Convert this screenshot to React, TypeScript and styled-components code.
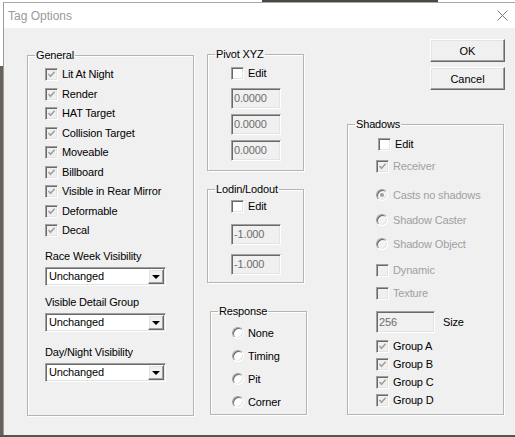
import React, { FC } from 'react';
import styled, { createGlobalStyle, css } from 'styled-components';

const GlobalStyle = createGlobalStyle`
  html, body {
    margin: 0;
    padding: 0;
  }
  body {
    width: 515px;
    height: 437px;
    overflow: hidden;
    background: #57534d;
    font-family: "Liberation Sans", Arial, sans-serif;
  }
  * {
    box-sizing: border-box;
  }
`;

const sunken = css`
  border: 1px solid;
  border-color: #a0a0a0 #ffffff #ffffff #a0a0a0;
  box-shadow: inset 1px 1px 0 #696969, inset -1px -1px 0 #e3e3e3;
`;

const raised = css`
  border: 1px solid;
  border-color: #ffffff #696969 #696969 #ffffff;
  box-shadow: inset -1px -1px 0 #a0a0a0, inset 1px 1px 0 #e3e3e3;
`;

const Desktop = styled.div`
  display: flex;
  flex-direction: column;
  width: 515px;
  height: 437px;
  background: #57534d;
`;

const TopStrip = styled.div`
  height: 2px;
  background: linear-gradient(
    to right,
    #ffffff 262px,
    #4b4741 262px,
    #4b4741 438px,
    #ffffff 438px
  );
`;

const Screen = styled.div`
  display: flex;
  height: 433px;
`;

const LeftEdge = styled.div`
  width: 3px;
  background: linear-gradient(to bottom, #ffffff 64px, #67625c 64px);
`;

const Window = styled.div`
  flex: 1;
  display: flex;
  flex-direction: column;
  background: #f0f0f0;
  border-left: 1px solid #9c9c9c;
  border-top: 1px solid #a8a8a8;
`;

const TitleBar = styled.div`
  height: 25px;
  display: flex;
  align-items: center;
  justify-content: space-between;
  padding: 0 7px 0 4px;
  background: #ffffff;
  font-size: 12px;
  color: #9a9a9a;
`;

const Client = styled.div`
  flex: 1;
  display: flex;
  align-items: flex-start;
  padding: 11px 0 0 23px;
  font-size: 11px;
  letter-spacing: -0.15px;
  color: #000000;
`;

const Column = styled.div<{ $w: number; $ml?: number; $mt?: number }>`
  display: flex;
  flex-direction: column;
  width: ${(p) => p.$w}px;
  margin-left: ${(p) => p.$ml ?? 0}px;
  margin-top: ${(p) => p.$mt ?? 0}px;
`;

const RightColumn = styled.div`
  display: flex;
  flex-direction: column;
  align-items: flex-end;
  width: 158px;
  margin-left: 40px;
`;

const GroupBox = styled.fieldset<{ $w: number; $h: number; $mt?: number; $ml?: number }>`
  margin: ${(p) => p.$mt ?? 0}px 0 0 ${(p) => p.$ml ?? 0}px;
  padding: 0;
  min-width: 0;
  width: ${(p) => p.$w}px;
  height: ${(p) => p.$h}px;
  border: 1px solid #b4b4b4;
  box-shadow: 1px 1px 0 #ffffff, inset 1px 1px 0 #ffffff;
  align-self: flex-start;
`;

const Legend = styled.legend`
  margin-left: 7px;
  padding: 0 1px;
  font-size: 11px;
  line-height: 13px;
  color: #000000;
`;

const Body = styled.div<{ $pt: number; $pl: number }>`
  display: flex;
  flex-direction: column;
  padding: ${(p) => p.$pt}px 0 0 ${(p) => p.$pl}px;
`;

const Row = styled.div<{ $h?: number; $mt?: number; $ml?: number; $gap?: number }>`
  display: flex;
  align-items: center;
  gap: ${(p) => p.$gap ?? 4}px;
  height: ${(p) => p.$h ?? 18}px;
  margin-top: ${(p) => p.$mt ?? 0}px;
  margin-left: ${(p) => p.$ml ?? 0}px;
`;

const Label = styled.span<{ $dim?: boolean }>`
  line-height: 13px;
  white-space: nowrap;
  color: ${(p) => (p.$dim ? '#a0a0a0' : '#000000')};
`;

const Box = styled.span<{ $disabled?: boolean }>`
  ${sunken};
  flex: none;
  display: flex;
  align-items: center;
  justify-content: center;
  width: 13px;
  height: 13px;
  background: ${(p) => (p.$disabled ? '#f0f0f0' : '#ffffff')};
`;

const Radio = styled.span<{ $disabled?: boolean; $on?: boolean }>`
  ${sunken};
  position: relative;
  flex: none;
  width: 12px;
  height: 12px;
  border-radius: 50%;
  background: ${(p) => (p.$disabled ? '#f4f4f4' : '#ffffff')};

  &::after {
    content: '';
    display: ${(p) => (p.$on ? 'block' : 'none')};
    position: absolute;
    left: 3px;
    top: 3px;
    width: 4px;
    height: 4px;
    border-radius: 50%;
    background: #a0a0a0;
  }
`;

const TextBox = styled.div<{ $w: number; $h: number; $mt?: number }>`
  ${sunken};
  display: flex;
  align-items: center;
  width: ${(p) => p.$w}px;
  height: ${(p) => p.$h}px;
  margin-top: ${(p) => p.$mt ?? 0}px;
  padding-left: 2px;
  background: #f0f0f0;
  color: #6d6d6d;
`;

const FieldLabel = styled.div<{ $mt: number }>`
  margin-top: ${(p) => p.$mt}px;
  line-height: 13px;
`;

const Select = styled.div`
  ${sunken};
  display: flex;
  align-items: center;
  justify-content: space-between;
  width: 121px;
  height: 19px;
  margin-top: 4px;
  padding: 2px 2px 2px 3px;
  background: #ffffff;
`;

const SelectArrow = styled.span`
  ${raised};
  display: flex;
  align-items: center;
  justify-content: center;
  width: 16px;
  height: 15px;
  margin-right: -1px;
  background: #f0f0f0;

  &::after {
    content: '';
    border-left: 4px solid transparent;
    border-right: 4px solid transparent;
    border-top: 4px solid #000000;
    margin-top: 1px;
  }
`;

const Button = styled.button<{ $mt?: number }>`
  ${raised};
  width: 75px;
  height: 23px;
  margin-top: ${(p) => p.$mt ?? 0}px;
  padding: 0;
  background: #f0f0f0;
  font-family: inherit;
  font-size: 11px;
  color: #000000;
`;

const Check: FC<{ checked?: boolean; disabled?: boolean }> = ({ checked, disabled }) => (
  <Box $disabled={disabled}>
    {checked && (
      <svg width="9" height="9" viewBox="0 0 9 9">
        <polyline points="1.5,4 3.5,6.2 7.6,1.8" fill="none" stroke="#a0a0a0" strokeWidth="1.6" />
      </svg>
    )}
  </Box>
);

const CloseIcon = () => (
  <svg width="11" height="11" viewBox="0 0 11 11">
    <path d="M0.5 0.5 L10.5 10.5 M10.5 0.5 L0.5 10.5" stroke="#7a7a7a" strokeWidth="1" />
  </svg>
);

const generalFlags = [
  'Lit At Night',
  'Render',
  'HAT Target',
  'Collision Target',
  'Moveable',
  'Billboard',
  'Visible in Rear Mirror',
  'Deformable',
  'Decal',
];

const visibilityFields = [
  { label: 'Race Week Visibility', top: 9 },
  { label: 'Visible Detail Group', top: 10 },
  { label: 'Day/Night Visibility', top: 14 },
];

const responses = ['None', 'Timing', 'Pit', 'Corner'];

const castOptions = [
  { label: 'Casts no shadows', on: true, top: 11 },
  { label: 'Shadow Caster', on: false, top: 7 },
  { label: 'Shadow Object', on: false, top: 6 },
];

const groups = ['Group A', 'Group B', 'Group C', 'Group D'];

export default function App() {
  return (
    <>
      <GlobalStyle />
      <Desktop>
        <TopStrip />
        <Screen>
          <LeftEdge />
          <Window>
            <TitleBar>
              <span>Tag Options</span>
              <CloseIcon />
            </TitleBar>
            <Client>
              <GroupBox $w={167} $h={367} $mt={10}>
                <Legend>General</Legend>
                <Body $pt={3} $pl={17}>
                  {generalFlags.map((name) => (
                    <Row key={name} $h={19.5}>
                      <Check checked disabled />
                      <Label>{name}</Label>
                    </Row>
                  ))}
                  {visibilityFields.map((f) => (
                    <React.Fragment key={f.label}>
                      <FieldLabel $mt={f.top}>{f.label}</FieldLabel>
                      <Select>
                        <span>Unchanged</span>
                        <SelectArrow />
                      </Select>
                    </React.Fragment>
                  ))}
                </Body>
              </GroupBox>

              <Column $w={100} $ml={13} $mt={9}>
                <GroupBox $w={97} $h={123}>
                  <Legend>Pivot XYZ</Legend>
                  <Body $pt={3} $pl={23}>
                    <Row $h={19.5}>
                      <Check />
                      <Label>Edit</Label>
                    </Row>
                    <TextBox $w={50} $h={21} $mt={4}>0.0000</TextBox>
                    <TextBox $w={50} $h={21} $mt={5}>0.0000</TextBox>
                    <TextBox $w={50} $h={21} $mt={5}>0.0000</TextBox>
                  </Body>
                </GroupBox>

                <GroupBox $w={97} $h={100} $mt={12}>
                  <Legend>Lodin/Lodout</Legend>
                  <Body $pt={1} $pl={23}>
                    <Row $h={19.5}>
                      <Check />
                      <Label>Edit</Label>
                    </Row>
                    <TextBox $w={50} $h={21} $mt={7}>-1.000</TextBox>
                    <TextBox $w={50} $h={21} $mt={9}>-1.000</TextBox>
                  </Body>
                </GroupBox>

                <GroupBox $w={97} $h={110} $mt={22} $ml={3}>
                  <Legend>Response</Legend>
                  <Body $pt={3.5} $pl={21}>
                    {responses.map((r) => (
                      <Row key={r} $h={23}>
                        <Radio />
                        <Label>{r}</Label>
                      </Row>
                    ))}
                  </Body>
                </GroupBox>
              </Column>

              <RightColumn>
                <Button>OK</Button>
                <Button $mt={5}>Cancel</Button>
                <GroupBox $w={157} $h={297} $mt={28}>
                  <Legend>Shadows</Legend>
                  <Body $pt={0} $pl={28}>
                    <Row $mt={4} $ml={2}>
                      <Check />
                      <Label>Edit</Label>
                    </Row>
                    <Row $mt={4}>
                      <Check checked disabled />
                      <Label $dim>Receiver</Label>
                    </Row>
                    {castOptions.map((c) => (
                      <Row key={c.label} $mt={c.top} $gap={5}>
                        <Radio $disabled $on={c.on} />
                        <Label $dim>{c.label}</Label>
                      </Row>
                    ))}
                    <Row $mt={8}>
                      <Check disabled />
                      <Label $dim>Dynamic</Label>
                    </Row>
                    <Row $mt={5}>
                      <Check disabled />
                      <Label $dim>Texture</Label>
                    </Row>
                    <Row $mt={9} $h={22} $gap={8}>
                      <TextBox $w={59} $h={22}>256</TextBox>
                      <Label>Size</Label>
                    </Row>
                    {groups.map((g, i) => (
                      <Row key={g} $mt={i === 0 ? 4 : 0}>
                        <Check checked disabled />
                        <Label>{g}</Label>
                      </Row>
                    ))}
                  </Body>
                </GroupBox>
              </RightColumn>
            </Client>
          </Window>
        </Screen>
      </Desktop>
    </>
  );
}
